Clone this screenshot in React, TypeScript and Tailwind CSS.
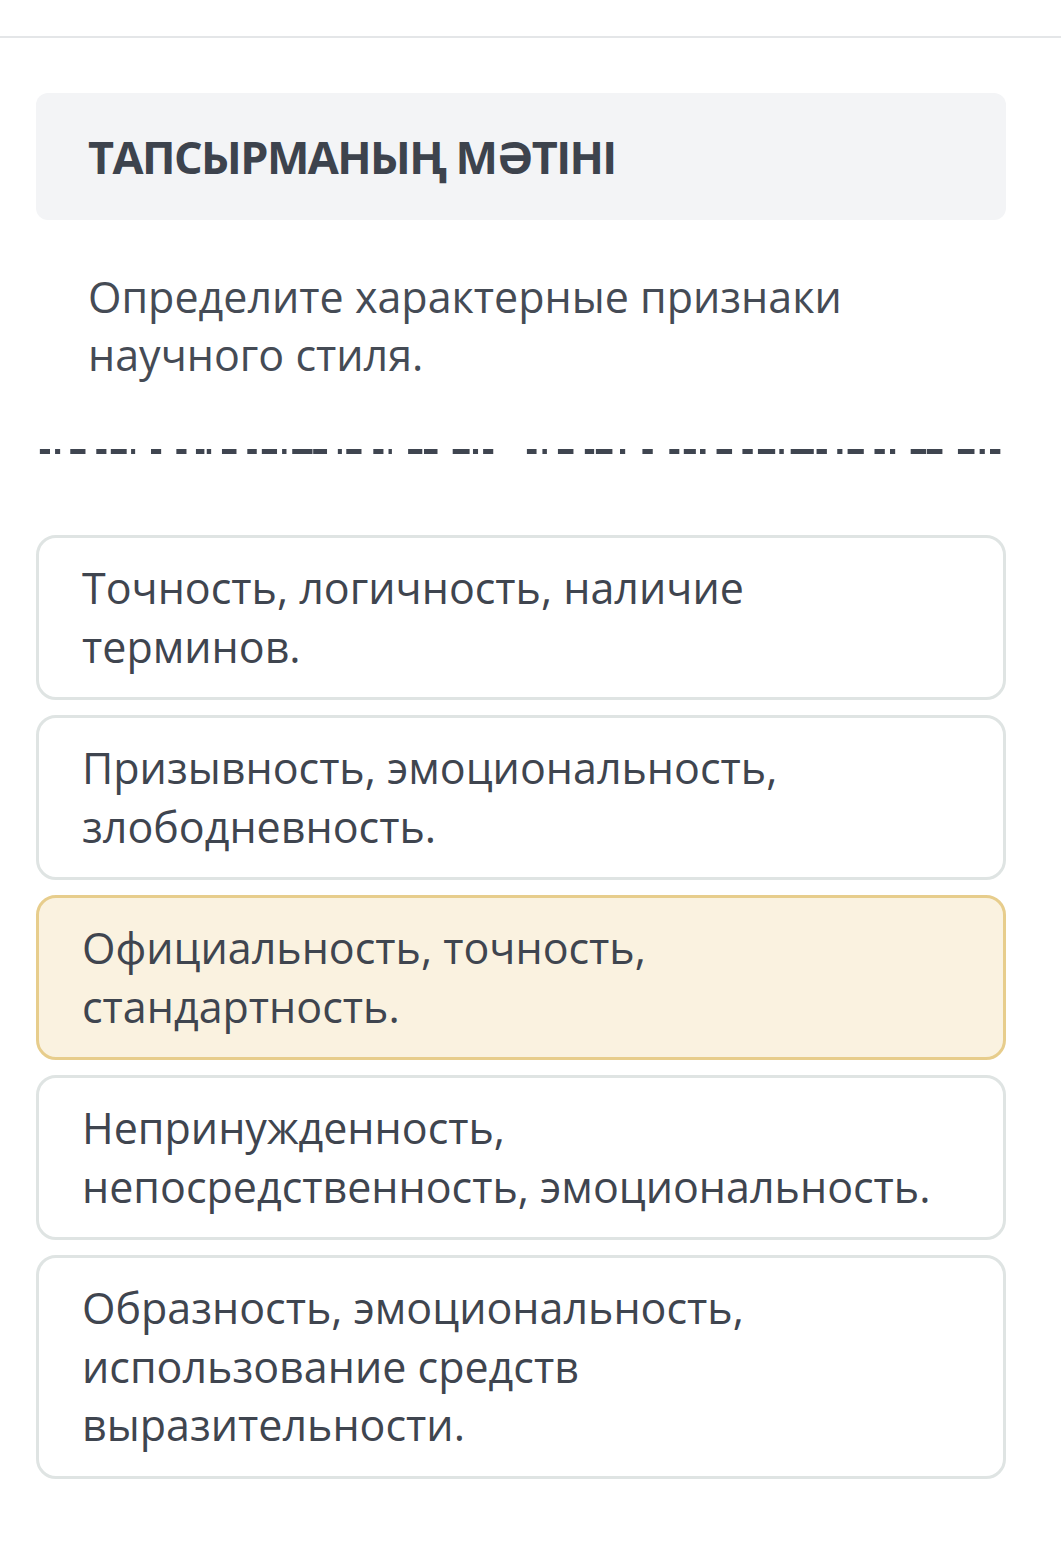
// dash runs of the hidden answer line, in crop pixels (converted below)
const firstRun: [number, number][] = [
  [118, 148], [163, 178], [208, 253], [285, 315], [328, 375], [388, 400], [447, 477],
  [522, 552], [580, 605], [612, 625], [657, 700], [732, 760], [775, 820], [835, 848],
  [865, 925], [927, 968], [1000, 1012], [1025, 1070], [1105, 1135], [1150, 1160],
  [1208, 1250], [1255, 1295], [1340, 1390], [1400, 1415], [1430, 1460],
];
const secondRun: [number, number][] = [
  [20, 48], [65, 78], [110, 155], [188, 215], [220, 268], [290, 305], [355, 385],
  [433, 462], [475, 510], [522, 538], [570, 615], [645, 675], [690, 740], [752, 765],
  [785, 852], [860, 890], [920, 935], [950, 997], [1028, 1058], [1073, 1088],
  [1133, 1178], [1180, 1225], [1270, 1318], [1333, 1348], [1363, 1393],
];

const options = [
  { text: 'Точность, логичность, наличие терминов.', selected: false },
  { text: 'Призывность, эмоциональность, злободневность.', selected: false },
  { text: 'Официальность, точность, стандартность.', selected: true },
  { text: 'Непринужденность, непосредственность, эмоциональность.', selected: false },
  { text: 'Образность, эмоциональность, использование средств выразительности.', selected: false },
];

const HiddenText = () => (
  <svg width="1061" height="6" viewBox="0 0 1061 6" className="block">
    {firstRun.map(([a, b], i) => (
      <rect key={`a${i}`} x={a / 2.96} y={0} width={(b - a) / 2.96} height={5} fill="#3f4550" />
    ))}
    {secondRun.map(([a, b], i) => (
      <rect key={`b${i}`} x={520 + a / 2.9} y={0} width={(b - a) / 2.9} height={5} fill="#3f4550" />
    ))}
  </svg>
);

export default function App() {
  return (
    <div className="min-h-[1557px] w-[1061px] bg-white text-[#3d434d]" style={{ fontFamily: '"Open Sans", "Noto Sans", sans-serif' }}>
      <div className="h-[36px]" />
      <div className="h-[2px] bg-[#e4e6e8]" />

      <div className="pl-[36px] pr-[55px] pt-[55px]">
        <div className="rounded-[12px] bg-[#f3f4f6] h-[127px] flex items-center pl-[52px]">
          <h1 className="text-[45px] font-bold tracking-[-0.035em] leading-none">ТАПСЫРМАНЫҢ МӘТІНІ</h1>
        </div>

        <p className="mt-[48px] pl-[52px] pr-[60px] text-[43px] leading-[58px] text-[#454b55]">
          Определите характерные признаки научного стиля.
        </p>
      </div>

      <div className="mt-[65px]">
        <HiddenText />
      </div>

      <div className="pl-[36px] pr-[55px] mt-[80px] flex flex-col gap-[15px]">
        {options.map((o) => (
          <div
            key={o.text}
            className={
              o.selected
                ? 'rounded-[20px] border-[3px] border-[#e7cd8c] bg-[#faf2e0] pl-[43px] pr-[60px] py-[21px]'
                : 'rounded-[20px] border-[3px] border-[#dfe4e3] bg-white pl-[43px] pr-[60px] py-[21px]'
            }
          >
            <p className="text-[43px] leading-[58.5px] text-[#3f454f]">{o.text}</p>
          </div>
        ))}
      </div>
    </div>
  );
}
